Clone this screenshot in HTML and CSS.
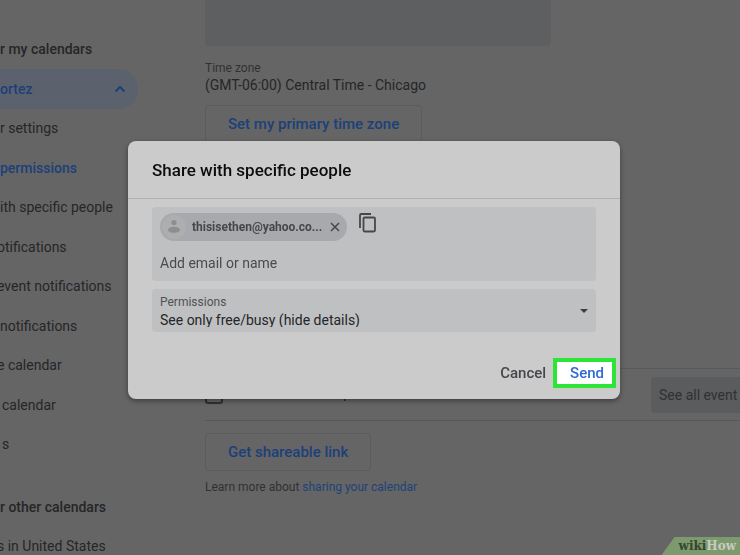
FILE: index.html
```
<!DOCTYPE html>
<html lang="en">
<head>
    <meta charset="utf-8">
    <title>Calendar Settings</title>
    <link rel="stylesheet" href="styles.css">
</head>
<body>

    <div class="page">
        <!-- Sidebar -->
        <nav class="sidebar">
            <h2>r my calendars</h2>
            <button type="button" class="calendar-toggle">
                ortez
                <svg width="12" height="8" viewBox="0 0 12 8"><path d="M1.5 6.5 6 2l4.5 4.5" fill="none" stroke="currentColor" stroke-width="2"/></svg>
            </button>
            <ul>
                <li><a href="#">r settings</a></li>
                <li><a href="#" class="active">permissions</a></li>
                <li><a href="#">ith specific people</a></li>
                <li><a href="#" class="clipped">otifications</a></li>
                <li><a href="#" class="clipped">event notifications</a></li>
                <li><a href="#">notifications</a></li>
                <li><a href="#" class="clipped">e calendar</a></li>
                <li><a href="#" class="indent">calendar</a></li>
                <li><a href="#" class="indent">s</a></li>
            </ul>
            <h2 class="other">r other calendars</h2>
            <ul>
                <li><a href="#" class="clipped">s in United States</a></li>
            </ul>
        </nav>

        <!-- Settings -->
        <main class="content">
            <div class="description"></div>
            <div class="time-zone">
                <span class="caption">Time zone</span>
                <span>(GMT-06:00) Central Time - Chicago</span>
            </div>
            <button type="button" class="outline-button">Set my primary time zone</button>

            <div class="access">
                <label><input type="checkbox"> Make available to public</label>
                <button type="button" class="event-details">See all event</button>
            </div>

            <button type="button" class="outline-button">Get shareable link</button>
            <p class="help">Learn more about <a href="#">sharing your calendar</a></p>
        </main>
    </div>

    <!-- Share dialog -->
    <div class="overlay">
        <form class="dialog" role="dialog" aria-labelledby="dialogTitle">
            <h1 id="dialogTitle">Share with specific people</h1>
            <div class="dialog-body">
                <div class="people">
                    <div class="people-row">
                        <div class="chip">
                            <svg class="avatar" width="24" height="24" viewBox="0 0 24 24">
                                <circle cx="12" cy="12" r="12" fill="#adaeaf"/>
                                <circle cx="12" cy="7.5" r="2.6" fill="#8b908c"/>
                                <ellipse cx="12" cy="14.8" rx="6" ry="3" fill="#8b908c"/>
                            </svg>
                            <span>thisisethen@yahoo.co...</span>
                            <button type="button" aria-label="Remove">
                                <svg width="10" height="10" viewBox="0 0 10 10"><path d="M1 1l8 8M9 1 1 9" stroke="currentColor" stroke-width="1.5"/></svg>
                            </button>
                        </div>
                        <button type="button" class="copy" aria-label="Copy">
                            <svg width="18" height="20" viewBox="0 0 18 20" fill="none" stroke="currentColor" stroke-width="1.8"><path d="M1 15V2.2Q1 1 2.2 1H12"/><rect x="4.5" y="4.5" width="11.5" height="14" rx="1.2"/></svg>
                        </button>
                    </div>
                    <input type="text" id="email" name="email" placeholder="Add email or name" aria-label="Add email or name">
                </div>

                <div class="permissions">
                    <div class="permissions-field">
                        <label for="permissions">Permissions</label>
                        <select id="permissions" name="permissions">
                            <option>See only free/busy (hide details)</option>
                        </select>
                    </div>
                    <svg width="8" height="4" viewBox="0 0 8 4"><path d="M0 0h8L4 4z" fill="#3c3d3f"/></svg>
                </div>
            </div>

            <div class="actions">
                <button type="button" class="cancel">Cancel</button>
                <button type="submit" class="send">Send</button>
            </div>
        </form>
    </div>

    <div class="watermark"><span>wiki</span>How</div>

</body>
</html>
```
FILE: styles.css
```
/* General Styling */
* {
    box-sizing: border-box;
}

body {
    margin: 0;
    height: 100vh;
    overflow: hidden;
    background: #656565;
    color: #252628;
    font-family: Roboto, "Liberation Sans", sans-serif;
    font-size: 14px;
    line-height: 20px;
}

button,
input,
select {
    font: inherit;
    color: inherit;
    margin: 0;
    padding: 0;
    border: none;
    background: none;
}

button { cursor: pointer; }

a { text-decoration: none; color: inherit; }

svg { display: block; flex: none; }

.page {
    display: flex;
    gap: 67px;
}

/* Sidebar */
.sidebar {
    flex: none;
    width: 138px;
    padding-top: 39px;
    white-space: nowrap;
}

.sidebar h2 {
    margin: 0 0 10px;
    font-size: 14px;
    font-weight: 500;
}

.sidebar h2.other { margin: 33px 0 10px; }

.calendar-toggle {
    display: flex;
    justify-content: space-between;
    align-items: center;
    width: 100%;
    height: 40px;
    padding-right: 12px;
    border-radius: 0 20px 20px 0;
    background: #5b626e;
    color: #1c4079;
    font-weight: 500;
}

.sidebar ul {
    margin: 0;
    padding: 0;
    list-style: none;
}

.sidebar li { line-height: 39px; }

.sidebar li:nth-child(even) { line-height: 40px; }

.sidebar .indent { padding-left: 2px; }

.sidebar .clipped { margin-left: -3px; }

.sidebar .active {
    color: #1c4079;
    font-weight: 500;
}

/* Settings */
.content {
    flex: 1;
    min-width: 0;
}

.description {
    max-width: 346px;
    height: 46px;
    border-radius: 0 0 4px 4px;
    background: #5e5f61;
}

.time-zone {
    display: flex;
    flex-direction: column;
    padding: 14px 0 11px;
}

.time-zone span { line-height: 18px; }

.time-zone .caption,
.help {
    font-size: 12px;
    color: #303132;
}

.time-zone .caption { line-height: 16px; }

.outline-button {
    height: 38px;
    padding: 0 22px;
    border: 1px solid #5b5c5d;
    border-radius: 4px;
    color: #1c4079;
    font-size: 15px;
    font-weight: 500;
}

.access {
    display: flex;
    justify-content: space-between;
    align-items: center;
    height: 53px;
    margin: 225px 0 12px;
    border-top: 1px solid #595959;
    border-bottom: 1px solid #595959;
}

.access label {
    display: flex;
    align-items: flex-start;
    gap: 8px;
    line-height: 14px;
}

.access input {
    appearance: none;
    width: 18px;
    height: 18px;
    border: 2px solid #303132;
    border-radius: 3px;
}

.event-details {
    width: 89px;
    height: 36px;
    padding-left: 8px;
    border-radius: 4px 0 0 4px;
    background: #5b5c5e;
    color: #303132;
    text-align: left;
    white-space: nowrap;
}

.help {
    margin: 6px 0 0;
}

.help a { color: #1f427a; }

/* Share dialog */
.overlay {
    position: fixed;
    inset: 0;
    display: flex;
    justify-content: center;
    align-items: center;
    padding: 0 0 15px 8px;
}

.dialog {
    width: 100%;
    max-width: 492px;
    border-radius: 8px;
    background: #cbcbcb;
    box-shadow: 0 2px 5px rgba(0, 0, 0, 0.4);
}

.dialog h1 {
    margin: 0;
    padding: 19px 24px 18px;
    border-bottom: 1px solid #b0b1b2;
    color: #0c0c0c;
    font-size: 17px;
    font-weight: 500;
}

.dialog-body {
    display: flex;
    flex-direction: column;
    gap: 8px;
    padding: 8px 24px 0;
}

.people,
.permissions {
    border-radius: 4px;
    background: #bfc0c2;
}

.people { padding: 6px 8px 8px; }

.people-row {
    display: flex;
    gap: 12px;
}

.chip {
    display: flex;
    align-items: center;
    width: 187px;
    height: 28px;
    padding: 0 7px 0 2px;
    border-radius: 14px;
    background: #a8a9ac;
    color: #45474a;
    font-size: 12px;
    font-weight: 700;
}

.chip span {
    flex: 1;
    padding-left: 6px;
}

.copy {
    height: 20px;
    color: #45474a;
}

.people input {
    width: 100%;
    height: 20px;
    margin-top: 12px;
    outline: none;
}

.people input::placeholder {
    color: #4a4b4e;
    opacity: 1;
}

.permissions {
    display: flex;
    align-items: center;
    padding: 5px 8px;
}

.permissions-field {
    flex: 1;
    display: flex;
    flex-direction: column;
}

.permissions label {
    color: #505255;
    font-size: 12px;
    line-height: 16px;
}

.permissions select {
    appearance: none;
    height: 17px;
    outline: none;
}

.actions {
    display: flex;
    justify-content: flex-end;
    align-items: center;
    gap: 7px;
    padding: 26px 4px 11px;
    font-size: 15px;
    font-weight: 500;
}

.cancel { color: #45474a; }

.send {
    height: 30px;
    padding: 0 8px 0 13px;
    border: 4px solid #2ce538;
    background: #fff;
    color: #2f69d2;
}

/* Watermark */
.watermark {
    position: fixed;
    right: 0;
    bottom: 0;
    padding: 0 4px 0 17px;
    background: #7d9a6e;
    clip-path: polygon(13px 0, 100% 0, 100% 100%, 0 100%);
    color: #c5cdbf;
    font-family: "DejaVu Serif", serif;
    font-size: 12px;
    font-weight: 700;
    line-height: 18px;
}

.watermark span { color: #35452e; }
```
